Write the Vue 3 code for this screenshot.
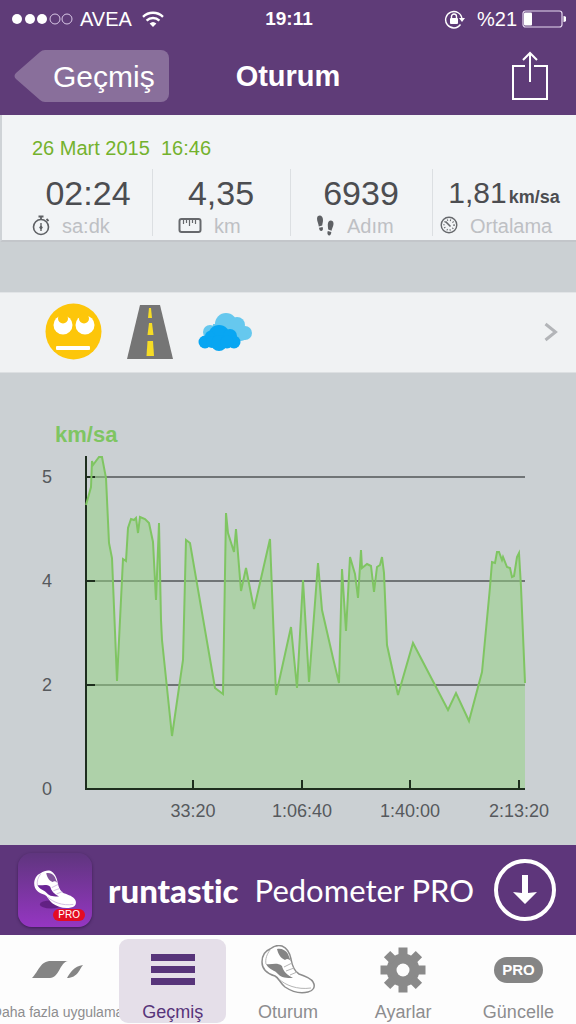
<script setup>
import { computed } from 'vue'

const stats = [
  { id: 'time', value: '02:24', label: 'sa:dk' },
  { id: 'distance', value: '4,35', label: 'km' },
  { id: 'steps', value: '6939', label: 'Adım' },
  { id: 'speed', value: '1,81', unit: 'km/sa', label: 'Ortalama' }
]

const tabs = [
  { id: 'more', label: 'Daha fazla uygulama' },
  { id: 'history', label: 'Geçmiş' },
  { id: 'session', label: 'Oturum' },
  { id: 'settings', label: 'Ayarlar' },
  { id: 'upgrade', label: 'Güncelle' }
]

const activeTab = 'history'

// plot origin inside the chart svg
const left = 86
const bottom = 416
const right = 525

const yTicks = [
  { label: '5', h: 312 },
  { label: '4', h: 208 },
  { label: '2', h: 104 }
]

const xTicks = [
  { label: '33:20', x: 107 },
  { label: '1:06:40', x: 216 },
  { label: '1:40:00', x: 324 },
  { label: '2:13:20', x: 433 }
]

// [distance from the y axis, height over the x axis]
const samples = [
  [0, 284], [5, 302], [6, 328], [7, 324], [13, 332], [16, 332], [20, 311],
  [23, 246], [26, 231], [31, 108], [37, 230], [40, 228], [42, 261], [45, 270],
  [48, 269], [50, 271], [52, 256], [54, 272], [59, 270], [63, 266], [67, 247],
  [70, 189], [73, 266], [75, 169], [76, 149], [86, 53], [97, 129], [100, 249],
  [104, 246], [129, 101], [137, 95], [140, 276], [142, 256], [148, 237],
  [150, 260], [155, 198], [160, 221], [168, 180], [184, 250], [190, 94],
  [205, 162], [211, 101], [217, 209], [223, 107], [232, 226], [236, 179],
  [247, 131], [253, 106], [256, 220], [260, 158], [264, 232], [269, 215],
  [272, 191], [275, 239], [276, 221], [281, 225], [285, 223], [288, 197],
  [291, 222], [294, 224], [296, 232], [298, 216], [301, 144], [312, 94],
  [327, 146], [362, 79], [370, 96], [383, 68], [396, 117], [404, 202],
  [406, 227], [409, 226], [411, 237], [413, 237], [416, 229], [417, 232],
  [421, 222], [424, 221], [426, 212], [428, 213], [431, 232], [433, 236],
  [435, 202], [439, 106]
]

const line = computed(() =>
  samples.map(([x, h]) => `${left + x},${bottom - h}`).join(' ')
)

const area = computed(() =>
  `${left},${bottom} ${line.value} ${right},${bottom}`
)

// shoe drawing, shared by the app icon and the session tab
const shoe = {
  outline: 'M1 17C1 11 4 6 9 4C13 1 18 0 21 1C26 3 29 9 30 14C31 20 33 26 38 29C44 31 50 33 52 37C55 42 52 46 47 47C39 49 30 46 24 42C19 38 18 33 14 31C7 29 1 25 1 17z',
  side: 'M5 19C11 20 16 17 21 21C22 26 26 30 32 33C26 33 20 33 17 29C14 25 8 25 5 19z',
  tongue: 'M16 4C20 3 25 5 27 9C28 12 29 14 30 16C28 14 26 13 24 15C19 13 17 8 16 4z',
  laces: 'M23 22L31 18M25 26L33 23M29 30L36 27M9 5C6 9 4 14 5 19M18 34C24 40 36 45 50 43'
}
</script>

<template>
  <div class="app">

    <header class="header">
      <div class="status">
        <div class="status-left">
          <svg width="62" height="14" viewBox="0 0 62 14">
            <g fill="#fff">
              <circle cx="5" cy="7" r="5" />
              <circle cx="18" cy="7" r="5" />
              <circle cx="30" cy="7" r="5" />
            </g>
            <g fill="none" stroke="#d9c8e6">
              <circle cx="43" cy="7" r="5" />
              <circle cx="55" cy="7" r="5" />
            </g>
          </svg>
          <span>AVEA</span>
          <svg class="wifi" width="22" height="17" viewBox="0 0 22 17">
            <g fill="none" stroke="#fff" stroke-width="2.4">
              <path d="M1 5.8a14.5 14.5 0 0 1 20 0" />
              <path d="M4.6 9.6a9.3 9.3 0 0 1 12.8 0" />
            </g>
            <path d="M7.6 12.6a5 5 0 0 1 6.8 0L11 16z" fill="#fff" />
          </svg>
        </div>

        <div class="clock">19:11</div>

        <div class="status-right">
          <svg width="22" height="19" viewBox="0 0 22 19">
            <path d="M16.500 14.500A8.200 8.200 0 1 1 18 9" fill="none" stroke="#fff" stroke-width="1.4" />
            <path d="M15 8h6l-3 4z" fill="#fff" />
            <rect x="6" y="8" width="8" height="6" rx="1" fill="#fff" />
            <path d="M7.5 8.5V6.5a2.5 2.5 0 0 1 5 0v2" fill="none" stroke="#fff" stroke-width="1.4" />
          </svg>
          <span class="battery-text">%21</span>
          <svg width="44" height="18" viewBox="0 0 44 18">
            <rect x="1" y="1" width="39" height="16" rx="2.5" fill="none" stroke="#e6d8ef" stroke-width="1.2" />
            <rect x="2" y="2.5" width="8" height="13" rx="1" fill="#fff" />
            <path d="M41.5 6a3 3 0 0 1 0 6z" fill="#fff" />
          </svg>
        </div>
      </div>

      <nav class="navbar">
        <button class="back" type="button">
          <svg class="back-tip" width="31" height="52" viewBox="0 0 31 52">
            <path d="M31 0Q28 0 26 2L2 23Q-1 26 2 29L26 50Q28 52 31 52z" fill="#896f9b" />
          </svg>
          <span class="back-label">Geçmiş</span>
        </button>

        <h1 class="title">Oturum</h1>

        <button class="share" type="button" aria-label="Paylaş">
          <svg width="36" height="50" viewBox="0 0 36 50" fill="none" stroke="#fff" stroke-width="2">
            <path d="M13 15H1v33h34V15H22" />
            <path d="M18 31V3M11 9l7-7 7 7" />
          </svg>
        </button>
      </nav>
    </header>

    <section class="summary">
      <div class="date">26 Mart 2015&nbsp; 16:46</div>

      <div class="stats">
        <div
          v-for="stat in stats"
          :key="stat.id"
          class="stat"
        >
          <div class="stat-value">
            <span :class="{ small: stat.unit }">{{ stat.value }}</span>
            <span v-if="stat.unit" class="unit">{{ stat.unit }}</span>
          </div>

          <div class="stat-label" :class="stat.id">
            <svg v-if="stat.id === 'time'" width="18" height="21" viewBox="0 0 18 21" fill="none" stroke="#5e6064">
              <circle cx="9" cy="12" r="7.5" stroke-width="1.6" />
              <path d="M6.5 1.5h5M9 2v3M14.5 4l2 2" stroke-width="1.8" />
              <path d="M9 8v8" stroke-width="1.4" />
              <circle cx="9" cy="12.5" r="1.2" fill="#5e6064" />
            </svg>
            <svg v-else-if="stat.id === 'distance'" width="24" height="21" viewBox="0 0 24 21" fill="none" stroke="#66686c">
              <rect x="1.5" y="4" width="21" height="13" rx="2" stroke-width="2" />
              <path d="M5.5 5v4M8.5 5v3M11.5 5v6M14.5 5v3M17.5 5v4" stroke-width="1.2" />
            </svg>
            <svg v-else-if="stat.id === 'steps'" width="19" height="21" viewBox="0 0 19 21" fill="#5e6064">
              <path d="M1.5 1.500C4-.5 7 1 7 5c0 2-.5 3.500-.8 5.500L2.800 11.500C2.500 8 0 5 1.500 1.500z" />
              <path d="M3 12.800l3.600-.8c.8 2 .2 3.700-1.100 4-1.400.2-2.300-1-2.500-3.200z" />
              <path d="M17 6.500c-2.500-2-5-.5-5.200 3 0 2 .2 3 .4 5l3.400 1.200c.5-3 3-6 1.400-9.200z" />
              <path d="M15.300 17l-3.500-1c-.8 2-.4 4 1 4.400 1.400.4 2.400-1 2.500-3.400z" />
            </svg>
            <svg v-else width="18" height="21" viewBox="0 0 18 21" fill="none" stroke="#66686c">
              <circle cx="9" cy="10" r="7.8" stroke-width="1.4" />
              <circle cx="9" cy="10" r="5" stroke-dasharray="1 2" stroke-width="1.6" />
              <path d="M5.5 6.5l5 5" stroke-width="1.6" />
            </svg>
            <span>{{ stat.label }}</span>
          </div>
        </div>
      </div>
    </section>

    <a class="conditions" href="#" aria-label="26 Mart 2015">
      <svg width="57" height="57" viewBox="0 0 57 57">
        <circle cx="28.5" cy="28.5" r="28" fill="#fdc60a" />
        <circle cx="18" cy="22" r="9.5" fill="#fff" />
        <circle cx="40" cy="22" r="9.5" fill="#fff" />
        <circle cx="18" cy="15.5" r="5" fill="#fdc60a" />
        <circle cx="39" cy="15.5" r="5" fill="#fdc60a" />
        <rect x="11" y="43" width="34" height="4" rx="1" fill="#fff" />
      </svg>
      <svg width="46" height="54" viewBox="0 0 46 54">
        <path d="M13 0h20l13 54H0z" fill="#757575" />
        <g fill="#f6dc25">
          <path d="M22 3h2l1 10h-4z" />
          <path d="M22 18h3l1.500 12h-6z" />
          <path d="M20.500 36h5.500l1 15h-7.500z" />
        </g>
      </svg>
      <svg width="54" height="40" viewBox="0 0 54 40">
        <g fill="#66c8ee">
          <circle cx="28" cy="12" r="11" />
          <circle cx="39" cy="13" r="8" />
          <circle cx="47" cy="21" r="7" />
          <circle cx="12" cy="20" r="7" />
          <circle cx="43" cy="23" r="6" />
          <rect x="15" y="12" width="28" height="16" />
        </g>
        <g fill="#08a6f2">
          <circle cx="21" cy="24" r="11" />
          <circle cx="7" cy="30" r="6.5" />
          <circle cx="12" cy="24" r="5" />
          <circle cx="32" cy="24" r="7" />
          <circle cx="36" cy="30" r="6.5" />
          <circle cx="14" cy="30" r="6" />
          <circle cx="21" cy="31" r="8" />
          <circle cx="29" cy="30" r="6.5" />
        </g>
      </svg>
      <svg class="chevron" width="14" height="20" viewBox="0 0 14 20">
        <path d="M1.5 2l10 8-10 8" fill="none" stroke="#b3b5b8" stroke-width="3" />
      </svg>
    </a>

    <main class="chart">
      <svg viewBox="0 0 576 472" role="img" aria-label="km/sa">
        <text class="axis-title" x="55" y="69">km/sa</text>

        <g v-for="tick in yTicks" :key="tick.label">
          <path
            :d="`M${left} ${bottom - tick.h}H${right}`"
            stroke="#707476"
            stroke-width="2"
          />
          <text class="axis-label" x="42" :y="bottom - tick.h + 6">{{ tick.label }}</text>
        </g>
        <text class="axis-label" x="42" :y="bottom + 6">0</text>

        <polygon :points="area" fill="#91d180" fill-opacity="0.5" />

        <path
          v-for="tick in yTicks"
          :key="tick.h"
          :d="`M${left} ${bottom - tick.h}h9`"
          stroke="#1e2e1e"
          stroke-width="2"
        />
        <path
          :d="`M${left} 83V${bottom}H${right}`"
          fill="none"
          stroke="#1e2e1e"
          stroke-width="2"
        />

        <polyline :points="line" fill="none" stroke="#7fc562" stroke-width="2" />

        <g v-for="tick in xTicks" :key="tick.label">
          <path
            :d="`M${left + tick.x} ${bottom}v-9`"
            stroke="#1e2e1e"
            stroke-width="2"
          />
          <text
            class="axis-label"
            :x="left + tick.x"
            y="444"
            text-anchor="middle"
          >{{ tick.label }}</text>
        </g>
      </svg>
    </main>

    <a class="banner" href="#">
      <span class="app-icon">
        <svg width="44" height="40" viewBox="0 0 54 50">
          <ellipse cx="22" cy="43" rx="14" ry="5" fill="#4b1467" opacity="0.6" />
          <path :d="shoe.outline" fill="#fff" />
          <path :d="shoe.side" fill="#6b2596" />
          <path :d="shoe.tongue" fill="#80539a" />
          <path :d="shoe.laces" fill="none" stroke="#c9aedb" />
        </svg>
        <span class="app-pro">PRO</span>
      </span>
      <span class="brand">runtastic</span>
      <span class="product">Pedometer PRO</span>
      <svg class="download" width="62" height="62" viewBox="0 0 62 62">
        <circle cx="31" cy="31" r="29" fill="none" stroke="#fff" stroke-width="4" />
        <path d="M28 16h6v18l9-1-12 12-12-12 9 1z" fill="#fff" />
      </svg>
    </a>

    <nav class="tabs">
      <button
        v-for="tab in tabs"
        :key="tab.id"
        class="tab"
        :class="{ active: tab.id === activeTab, long: tab.id === 'more' }"
        type="button"
      >
        <span class="tab-icon">
          <svg v-if="tab.id === 'more'" width="52" height="18" viewBox="0 0 52 18" fill="#858585">
            <path d="M0 17C7 10 8 0 19 0h17c-8 1-9 17-18 17z" />
            <path d="M35 17c3-5 7-12 16-13-3 3-5 13-16 13z" />
          </svg>
          <svg v-else-if="tab.id === 'history'" width="44" height="32" viewBox="0 0 44 32" fill="#57347a">
            <path d="M0 0h44v7H0zM0 12h44v7H0zM0 24h44v7H0z" />
          </svg>
          <svg v-else-if="tab.id === 'session'" width="54" height="50" viewBox="0 0 54 50">
            <path :d="shoe.outline" fill="#fff" stroke="#8d8d8d" stroke-width="1.5" />
            <path :d="shoe.side" fill="#858585" />
            <path :d="shoe.tongue" fill="#858585" />
            <path :d="shoe.laces" fill="none" stroke="#b5b5b5" />
          </svg>
          <svg v-else-if="tab.id === 'settings'" width="46" height="46" viewBox="-23 -23 46 46">
            <g fill="#8a8a8a">
              <circle r="16.5" />
              <rect
                v-for="n in 8"
                :key="n"
                x="-4.5"
                y="-22.5"
                width="9"
                height="10"
                :transform="`rotate(${n * 45})`"
              />
            </g>
            <circle r="6.5" fill="#fdfdfd" />
          </svg>
          <span v-else class="pro-pill">PRO</span>
        </span>
        <span class="tab-label">{{ tab.label }}</span>
      </button>
    </nav>

  </div>
</template>

<style>
body {
  margin: 0;
  background: #cbd0d3;
}
</style>

<style scoped>
.app {
  display: flex;
  flex-direction: column;

  min-height: 100vh;

  overflow: hidden;

  background: #cbd0d3;

  font-family: "Liberation Sans", Arial, sans-serif;
}

button {
  padding: 0;

  border: none;
  background: none;

  font-family: inherit;
}

svg {
  display: block;
  flex-shrink: 0;
}

.header {
  height: 115px;

  background: #5f3c78;
  color: #fff;
}

.status {
  display: grid;
  grid-template-columns: 1fr auto 1fr;
  align-items: center;

  height: 38px;

  padding: 0 10px 0 12px;

  font-size: 20px;
}

.status-left,
.status-right {
  display: flex;
  align-items: center;
}

.status-left {
  gap: 6px;
}

.wifi {
  margin-left: 4px;
}

.clock {
  font-size: 19px;
  font-weight: 700;
}

.status-right {
  justify-content: flex-end;

  gap: 5px;
}

.battery-text {
  margin-left: 6px;
}

.navbar {
  display: grid;
  grid-template-columns: 1fr auto 1fr;
  align-items: center;

  height: 76px;

  padding: 0 14px;
}

.back {
  display: flex;
  justify-self: start;

  color: #fff;

  font-size: 30px;
}

.back-label {
  height: 52px;

  padding: 0 14px 0 8px;

  border-radius: 0 8px 8px 0;

  background: #896f9b;

  line-height: 54px;
}

.title {
  margin: 0;

  font-size: 29px;
}

.share {
  justify-self: end;

  margin-right: 14px;
}

.summary {
  box-sizing: border-box;

  height: 127px;

  padding: 22px 0 0 22px;

  border-left: 2px solid #cfd3d7;
  border-bottom: 2px solid #c3c6ca;

  background: #f2f4f6;
}

.date {
  margin-left: 8px;

  color: #74b22d;

  font-size: 20px;
  line-height: 22px;
}

.stats {
  display: grid;
  grid-template-columns: 128fr 138fr 142fr 144fr;

  margin-top: 10px;
}

.stat + .stat {
  box-shadow: inset 1px 0 0 #dcdfe2;
}

.stat-value {
  display: flex;
  align-items: baseline;
  justify-content: center;

  gap: 2px;

  height: 46px;

  color: #4c4d51;

  font-size: 34px;
  line-height: 48px;
}

.small {
  font-size: 30px;
}

.unit {
  font-size: 18px;
  font-weight: 700;
}

.stat-label {
  display: flex;
  align-items: center;

  gap: 12px;

  padding-left: 8px;

  color: #bec0c4;

  font-size: 20px;
  line-height: 20px;
}

.stat-label.distance,
.stat-label.steps {
  padding-left: 26px;
}

.conditions {
  display: flex;
  align-items: center;

  gap: 25px;

  box-sizing: border-box;

  height: 81px;

  margin-top: 50px;

  padding: 0 18px 2px 45px;

  border-top: 1px solid #e2e5e7;
  border-bottom: 1px solid #dde0e2;

  background: #f0f2f3;
}

.chevron {
  margin-left: auto;
}

.chart svg {
  width: 100%;
}

.axis-title {
  fill: #7fc562;

  font-size: 22px;
  font-weight: 700;
}

.axis-label {
  fill: #56595d;

  font-size: 18px;
}

.banner {
  display: flex;
  align-items: center;

  height: 90px;

  padding: 0 20px 0 18px;

  background: #5e367b;
  color: #fff;

  text-decoration: none;
}

.app-icon {
  position: relative;

  display: flex;
  align-items: center;
  justify-content: center;

  width: 74px;
  height: 74px;

  border-radius: 14px;

  background:
    linear-gradient(#5f357e, #9536c2);

  box-shadow:
    0 1px 3px rgba(30,0,50,0.5);
}

.app-pro {
  position: absolute;
  right: 7px;
  bottom: 6px;

  padding: 0 5px;

  border-radius: 6px;

  background: #e40b22;

  font-size: 10px;
  line-height: 12px;
}

.brand {
  margin-left: 16px;

  font-family: Lato, sans-serif;
  font-size: 33px;
  font-variant-ligatures: none;
  font-weight: 900;
}

.product {
  margin-left: 16px;

  font-family: Lato, sans-serif;
  font-size: 31px;
}

.download {
  margin-left: auto;
}

.tabs {
  display: grid;
  grid-template-columns: repeat(5, 1fr);

  flex: 1;

  padding: 4px 0 3px;

  background: #fdfdfd;
}

.tab {
  display: flex;
  flex-direction: column;
  align-items: center;

  min-width: 0;

  margin: 0 4px;

  border-radius: 9px;

  color: #8d8d8f;

  font-size: 18px;
}

.tab.active {
  background: #e5dfe9;
  color: #57347a;
}

.tab.long {
  font-size: 14px;
}

.tab-icon {
  display: flex;
  align-items: center;
  justify-content: center;

  height: 62px;
}

.tab-label {
  line-height: 22px;
  white-space: nowrap;
}

.pro-pill {
  padding: 0 8px;

  border-radius: 13px;

  background: #858585;
  color: #fff;

  font-size: 15px;
  font-weight: 700;
  line-height: 26px;
}
</style>
